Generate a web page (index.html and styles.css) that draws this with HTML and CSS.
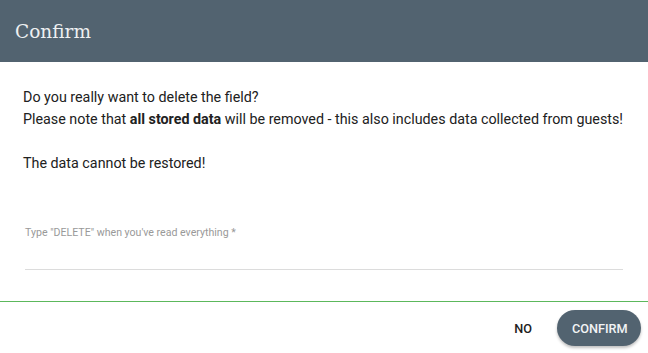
FILE: index.html
```html
<!DOCTYPE html>
<html>
<head>
<meta charset="utf-8">
<link rel="stylesheet" href="styles.css">
</head>
<body>
<div class="dialog">
  <header class="dialog-header"><h1 class="dialog-title">Confirm</h1></header>
  <main class="dialog-body">
    <p class="msg">Do you really want to delete the field?<br>Please note that <b>all stored data</b> will be removed - this also includes data collected from guests!<br><br>The data cannot be restored!</p>
    <div class="field">
      <label class="field-label">Type "DELETE" when you've read everything *</label>
      <div class="field-line"></div>
    </div>
  </main>
  <footer class="dialog-actions">
    <button class="btn btn-flat">No</button>
    <button class="btn btn-raised">Confirm</button>
  </footer>
</div>
</body>
</html>
```

FILE: styles.css
```css
html, body {
  margin: 0;
  padding: 0;
  background: #ffffff;
}
body {
  font-family: Roboto, "Liberation Sans", sans-serif;
  color: #212121;
}
.dialog {
  width: 648px;
  height: 353px;
  display: flex;
  flex-direction: column;
  overflow: hidden;
}
.dialog-header {
  height: 62px;
  flex: none;
  background: #526370;
  display: flex;
  align-items: center;
  padding: 0 15px;
  box-sizing: border-box;
}
.dialog-title {
  margin: 0;
  font-family: "DejaVu Serif", serif;
  font-weight: normal;
  font-size: 18.5px;
  color: #eef0f2;
  position: relative;
  top: 0px;
}
.dialog-body {
  padding: 24px 23px 0 23px;
  height: 240px;
  flex: none;
  box-sizing: border-box;
  border-bottom: 1px solid #5cb85c;
}
.msg {
  margin: 0;
  font-size: 14.3px;
  line-height: 22px;
  color: #212121;
}
.msg b {
  font-weight: 700;
}
.field {
  margin: 53px 2px 0 2px;
  width: 598px;
}
.field-label {
  display: block;
  font-size: 10.6px;
  line-height: 12px;
  color: #999999;
}
.field-line {
  margin-top: 30px;
  height: 1px;
  background: #dcdcdc;
}
.dialog-actions {
  display: flex;
  justify-content: flex-end;
  align-items: center;
  gap: 9px;
  padding: 8px 7px 0 0;
}
.btn {
  font-family: Roboto, "Liberation Sans", sans-serif;
  font-size: 12.7px;
  font-weight: 500;
  text-transform: uppercase;
  letter-spacing: 0;
  border: none;
  height: 36px;
  border-radius: 18px;
  cursor: pointer;
}
.btn-flat {
  background: transparent;
  color: #212121;
  padding: 0 16px;
}
.btn-raised {
  background: #526370;
  color: #f2f4f5;
  padding: 0 15px;
  width: 84px;
  box-shadow: 0 2px 3px rgba(0, 0, 0, 0.25);
}
```
